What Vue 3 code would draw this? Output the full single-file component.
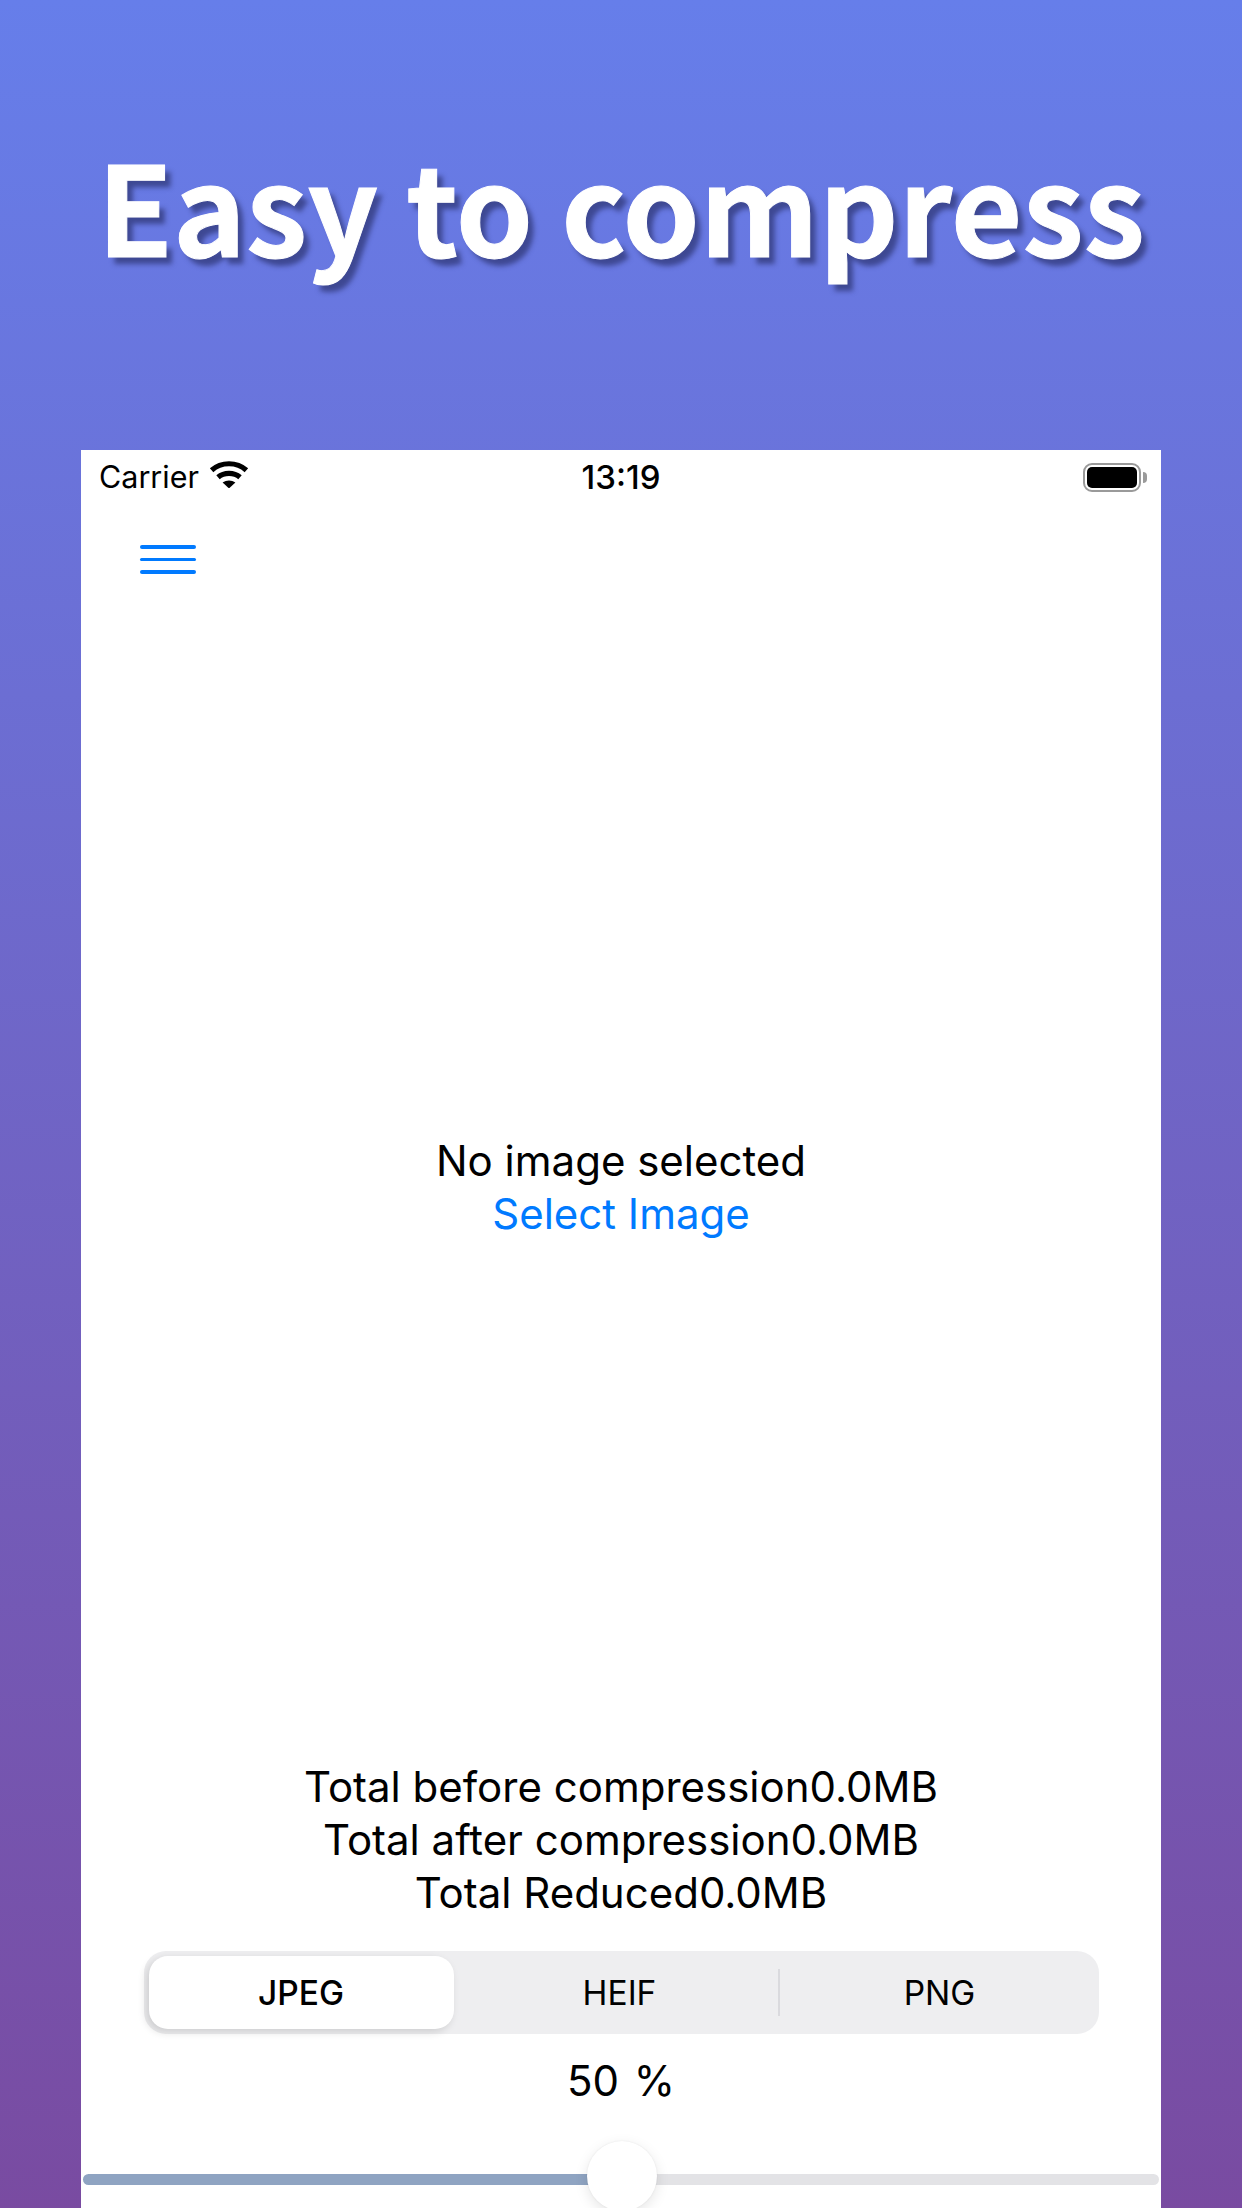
<script setup>
const stats = ['Total before compression0.0MB', 'Total after compression0.0MB', 'Total Reduced0.0MB']
const formats = ['JPEG', 'HEIF', 'PNG']
const quality = 50
</script>

<template>
  <div class="page">
    <h1 class="title">Easy to compress</h1>
    <main class="phone">
      <div class="status">
        <div class="status-left">
          <span class="carrier">Carrier</span>
          <svg class="wifi" viewBox="0 0 40 28" width="40" height="28" aria-hidden="true">
            <path d="M2.6 10.2C12.2 1.6 27.8 1.6 37.4 10.2" fill="none" stroke="#000" stroke-width="5.2" />
            <path d="M9 17.2C15 12 25 12 31 17.2" fill="none" stroke="#000" stroke-width="5.2" />
            <path d="M13.6 22.6C17.4 19.8 22.6 19.8 26.4 22.6L20 28.4Z" fill="#000" />
          </svg>
        </div>
        <span class="time">13:19</span>
        <div class="battery-wrap">
          <div class="battery"><div class="battery-level"></div></div>
          <div class="battery-nub"></div>
        </div>
      </div>
      <div class="nav">
        <button class="menu" aria-label="Menu"><span></span><span></span><span></span></button>
      </div>
      <section class="empty">
        <p class="line">No image selected</p>
        <p class="line link">Select Image</p>
      </section>
      <section class="stats">
        <p v-for="s in stats" :key="s" class="line">{{ s }}</p>
      </section>
      <div class="segments">
        <div v-for="(f, i) in formats" :key="f" class="segment" :class="{ active: i === 0 }">{{ f }}</div>
        <div class="divider"></div>
      </div>
      <p class="line percent">{{ quality }} %</p>
      <div class="slider">
        <div class="track-min"></div>
        <div class="track-max"></div>
        <div class="thumb"></div>
      </div>
    </main>
  </div>
</template>

<style>
html, body { margin: 0; padding: 0; }
</style>

<style scoped>
.page {
  width: 1242px;
  height: 2208px;
  overflow: hidden;
  background: linear-gradient(180deg, #667eea 0%, #794ba1 100%);
  display: flex;
  flex-direction: column;
  align-items: center;
  font-family: Inter, "Liberation Sans", sans-serif;
  color: #000;
}
.title {
  margin: 0;
  height: 450px;
  box-sizing: border-box;
  padding-top: 119px;
  font-family: "Noto Sans CJK JP", "Noto Sans", sans-serif;
  font-weight: 700;
  font-size: 123.5px;
  line-height: 170px;
  color: #fff;
  -webkit-text-stroke: 1px #fff;
  white-space: nowrap;
  text-shadow: 6px 7px 5px rgba(48, 56, 120, 0.75);
}
.phone {
  width: 1080px;
  height: 1758px;
  background: #fff;
  display: flex;
  flex-direction: column;
  overflow: hidden;
  flex: none;
}
.status {
  display: grid;
  grid-template-columns: 1fr auto 1fr;
  align-items: center;
  height: 54px;
  padding: 0 14px 0 18px;
  flex: none;
}
.status-left {
  display: flex;
  align-items: center;
  gap: 10px;
}
.carrier {
  font-size: 30.5px;
  line-height: 54px;
}
.wifi { display: block; margin-top: -6px; }
.time {
  font-size: 33px;
  font-weight: 500;
  line-height: 54px;
  margin-right: 4px;
}
.battery-wrap {
  justify-self: end;
  display: flex;
  align-items: center;
  gap: 2px;
}
.battery {
  box-sizing: border-box;
  width: 58px;
  height: 29px;
  border: 2.5px solid #9a9a9a;
  border-radius: 9px;
  padding: 2px;
}
.battery-level {
  width: 100%;
  height: 100%;
  background: #000;
  border-radius: 5px;
}
.battery-nub {
  width: 4px;
  height: 11px;
  background: #9a9a9a;
  border-radius: 0 4px 4px 0;
}
.nav {
  height: 84px;
  padding-left: 59px;
  flex: none;
  display: flex;
  align-items: flex-start;
}
.menu {
  display: flex;
  flex-direction: column;
  gap: 9px;
  width: 56px;
  margin: 41px 0 0;
  padding: 0;
  border: 0;
  background: none;
}
.menu span {
  display: block;
  height: 3.5px;
  border-radius: 2px;
  background: #007aff;
}
.line {
  margin: 0;
  font-size: 42px;
  line-height: 53px;
  text-align: center;
  white-space: nowrap;
}
.link { color: #007aff; }
.empty {
  flex: none;
  margin-top: 546px;
  height: 626px;
}
.stats {
  flex: none;
}
.segments {
  position: relative;
  flex: none;
  display: grid;
  grid-template-columns: repeat(3, 1fr);
  align-self: center;
  box-sizing: border-box;
  width: 955px;
  height: 83px;
  margin-top: 32px;
  padding: 5px;
  background: #eeeef0;
  border-radius: 22px;
}
.segment {
  display: flex;
  align-items: center;
  justify-content: center;
  font-size: 33.5px;
  font-weight: 400;
}
.segment:nth-child(2) { padding-right: 3px; }
.segment:nth-child(3) { padding-left: 7px; }
.segment.active {
  background: #fff;
  margin-right: 10px;
  border-radius: 19px;
  font-weight: 500;
  box-shadow: -3px 3px 8px rgba(0, 0, 0, 0.14);
}
.divider {
  position: absolute;
  left: 634px;
  top: 18px;
  width: 2px;
  height: 47px;
  background: #dadade;
}
.percent { margin-top: 20px; flex: none; word-spacing: 3px; }
.slider {
  position: relative;
  flex: none;
  display: flex;
  height: 11px;
  margin: 67px 2px 0;
}
.track-min {
  width: 506px;
  background: #8fa4c2;
  border-radius: 6px 0 0 6px;
}
.track-max {
  flex: 1;
  background: #e3e3e6;
  border-radius: 0 6px 6px 0;
}
.thumb {
  position: absolute;
  left: 504px;
  top: -33px;
  width: 70px;
  height: 70px;
  border-radius: 50%;
  background: #fff;
  box-shadow: 0 4px 14px rgba(0, 0, 0, 0.1), 0 0 2px rgba(0, 0, 0, 0.08);
}
</style>
